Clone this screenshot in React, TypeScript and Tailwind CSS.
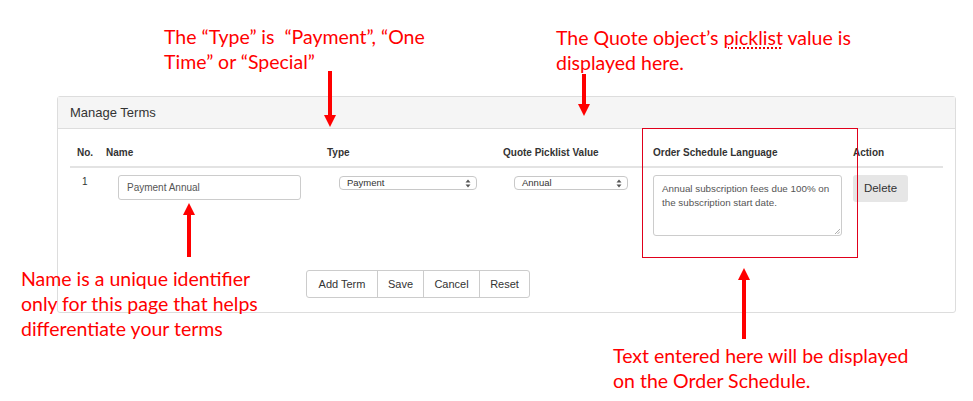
import { ReactNode } from "react"

function Arrow({ x, y, length, up }: { x: number; y: number; length: number; up?: boolean }) {
  // y is the tip of the arrow
  const top = up ? y : y - length
  return (
    <svg
      className="absolute"
      style={{ left: x - 7, top }}
      width={14}
      height={length}
      viewBox={`0 0 14 ${length}`}
    >
      {up ? (
        <>
          <polygon points={`7,0 13,12 1,12`} fill="#ff0000" />
          <rect x={5} y={11} width={4} height={length - 11} fill="#ff0000" />
        </>
      ) : (
        <>
          <rect x={5} y={0} width={4} height={length - 11} fill="#ff0000" />
          <polygon points={`1,${length - 12} 13,${length - 12} 7,${length}`} fill="#ff0000" />
        </>
      )}
    </svg>
  )
}

function Note({ className, children }: { className: string; children: ReactNode }) {
  return (
    <div className={`absolute whitespace-nowrap font-['Lato',sans-serif] text-[19.5px] leading-[25px] text-[#ff0000] ${className}`}>
      {children}
    </div>
  )
}

function UpDown() {
  return (
    <svg width="6" height="9" viewBox="0 0 6 9" className="mr-[5px]">
      <path d="M3 0.5 L5.5 3.5 H0.5 Z" fill="#555" />
      <path d="M3 8.5 L5.5 5.5 H0.5 Z" fill="#555" />
    </svg>
  )
}

function Select({ value, width }: { value: string; width: number }) {
  return (
    <div
      className="flex h-[14px] items-center justify-between rounded-[4px] border border-[#c8c8c8] bg-white pl-[7px] text-[9.5px] leading-none text-[#333]"
      style={{ width }}
    >
      <span>{value}</span>
      <UpDown />
    </div>
  )
}

const headers = ["No.", "Name", "Type", "Quote Picklist Value", "Order Schedule Language", "Action"]
const cols = "grid grid-cols-[29px_221px_176px_150px_200px_97px]"

export default function App() {
  return (
    <div className="relative h-[401px] w-[973px] overflow-hidden bg-white font-['Liberation_Sans',Arial,sans-serif]">
      <div className="ml-[57px] mt-[96px] h-[217px] w-[899px] rounded-[3px] border border-[#dddddd] bg-white">
        <div className="flex h-[32px] items-center border-b border-[#dddddd] bg-[#f5f5f5] px-[12px] text-[13px] text-[#333]">
          Manage Terms
        </div>
        <div className="px-[12px]">
          <div className={`${cols} border-b-2 border-[#e3e3e3] pt-[18px] pb-[7px] text-[10px] font-bold leading-[12px] text-[#333]`}>
            {headers.map((h) => (
              <div key={h} className="pl-[7px]">
                {h}
              </div>
            ))}
          </div>
          <div className={`${cols} pt-[7px]`}>
            <div className="pl-[12px] pt-[1px] text-[10px] leading-[12px] text-[#333]">1</div>
            <div className="pl-[19px]">
              <div className="flex h-[25px] w-[183px] items-center rounded-[3px] border border-[#cccccc] pl-[8px] text-[10px] text-[#555]">
                Payment Annual
              </div>
            </div>
            <div className="pl-[19px] pt-[1px]">
              <Select value="Payment" width={138} />
            </div>
            <div className="pl-[18px] pt-[1px]">
              <Select value="Annual" width={114} />
            </div>
            <div className="pl-[7px]">
              <div className="relative h-[61px] w-[189px] rounded-[3px] border border-[#cccccc] pl-[8px] pr-[4px] pt-[6px] text-[9.8px] leading-[14px] text-[#555]">
                Annual subscription fees due 100% on the subscription start date.
                <svg className="absolute bottom-[1px] right-[1px]" width="6" height="6" viewBox="0 0 6 6">
                  <path d="M1 6 L6 1 M3.5 6 L6 3.5" stroke="#999" strokeWidth="0.8" />
                </svg>
              </div>
            </div>
            <div className="pl-[7px]">
              <div className="flex h-[27px] w-[55px] items-center justify-center rounded-[3px] bg-[#e6e6e6] text-[11.5px] text-[#333]">
                Delete
              </div>
            </div>
          </div>
          <div className="mt-[34px] ml-[236px] flex h-[28px] w-fit overflow-hidden rounded-[3px] border border-[#cccccc] text-[11px] text-[#333]">
            <div className="flex w-[71px] items-center justify-center border-r border-[#cccccc]">Add Term</div>
            <div className="flex w-[46px] items-center justify-center border-r border-[#cccccc]">Save</div>
            <div className="flex w-[56px] items-center justify-center border-r border-[#cccccc]">Cancel</div>
            <div className="flex w-[49px] items-center justify-center">Reset</div>
          </div>
        </div>
      </div>

      <div className="absolute left-[642px] top-[128px] h-[130px] w-[216px] border border-[#e0001b]" />

      <Arrow x={330} y={127} length={56} />
      <Arrow x={584} y={116} length={42} />
      <Arrow x={189} y={203} length={54} up />
      <Arrow x={744} y={268} length={71} up />

      <Note className="left-[164px] top-[24px]">
        The “Type” is&nbsp; “Payment”, “One
        <br />
        Time” or “Special”
      </Note>
      <Note className="left-[556px] top-[25px]">
        The Quote object’s{" "}
        <span className="underline decoration-dotted decoration-[#e00] underline-offset-[3px]">picklist</span> value is
        <br />
        displayed here.
      </Note>
      <Note className="left-[21px] top-[266px] leading-[24px]">
        Name is a unique identifier
        <br />
        only for this page that helps
        <br />
        differentiate your terms
      </Note>
      <Note className="left-[613px] top-[343px]">
        Text entered here will be displayed
        <br />
        on the Order Schedule.
      </Note>
    </div>
  )
}
